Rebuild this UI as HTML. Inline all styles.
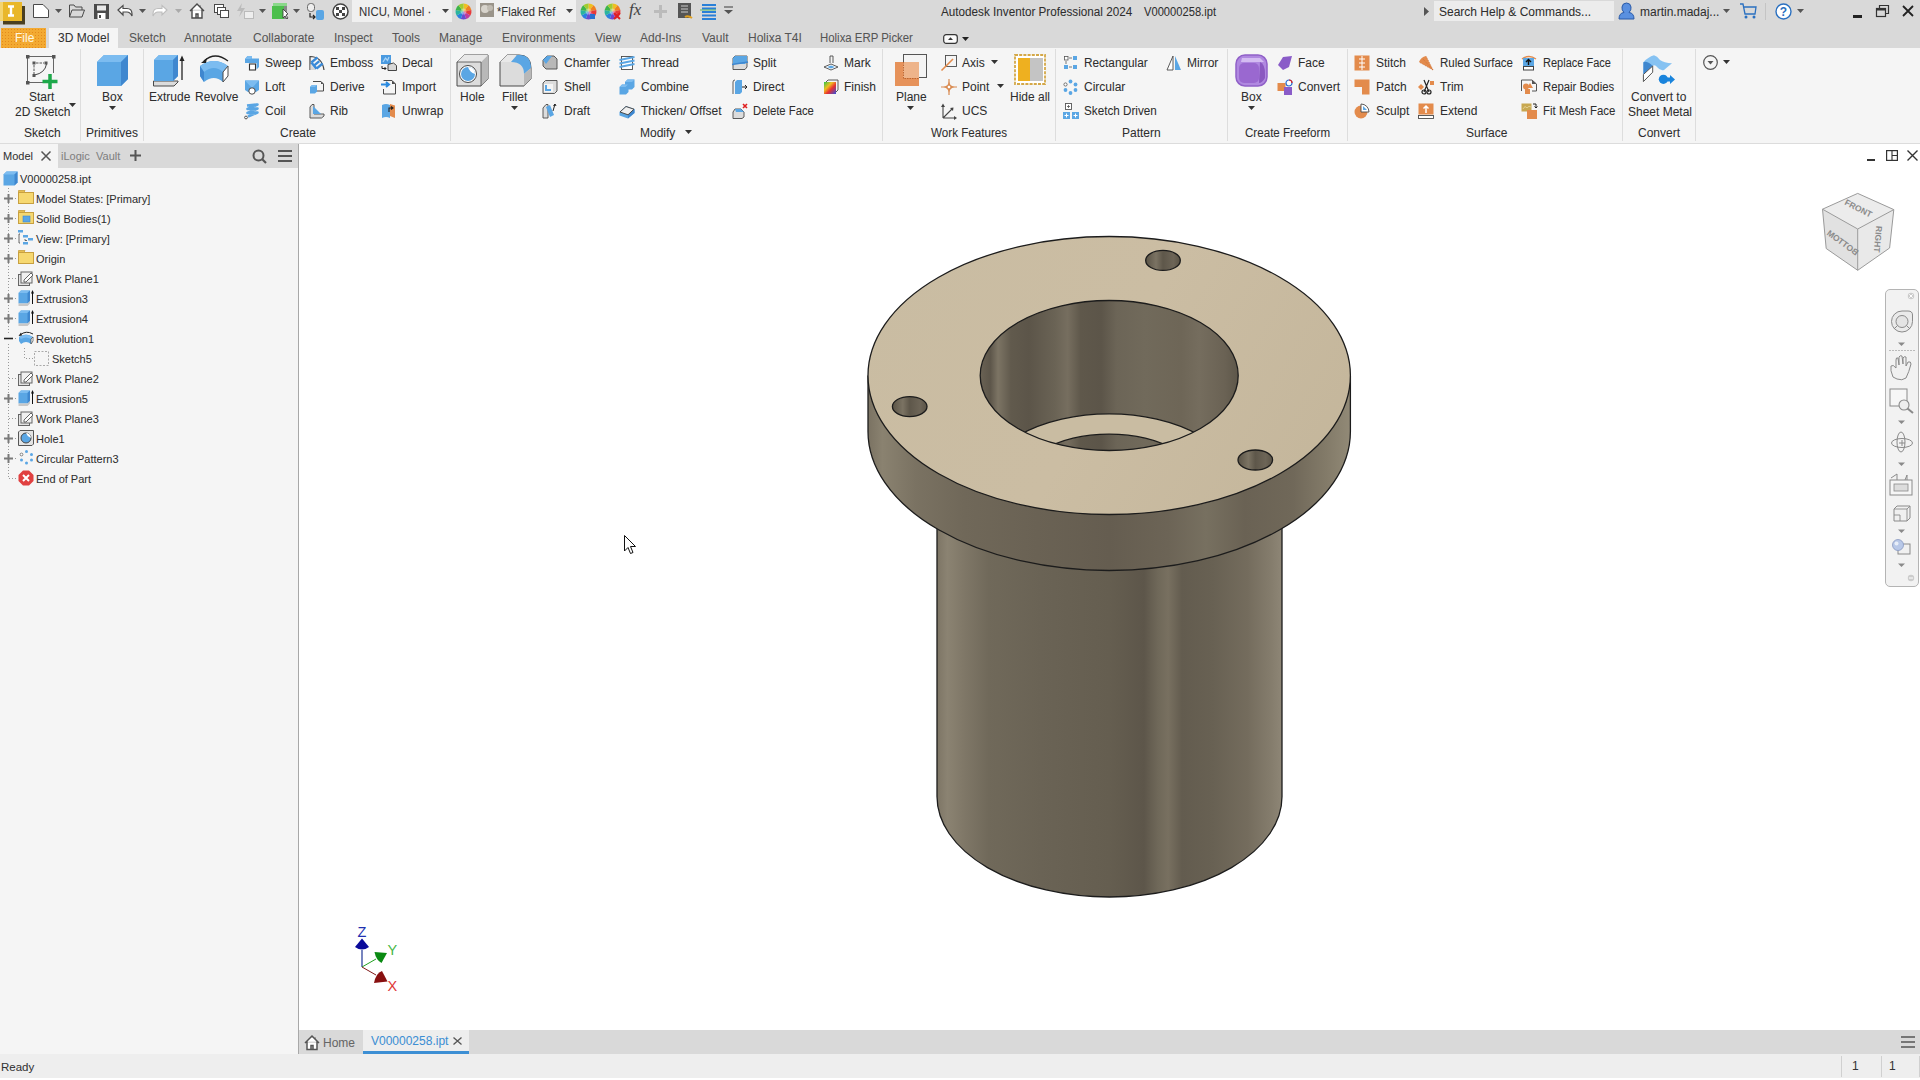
<!DOCTYPE html><html><head><meta charset='utf-8'><style>
*{margin:0;padding:0;box-sizing:border-box}
html,body{width:1920px;height:1080px;overflow:hidden;background:#fff}
body{position:relative;font-family:"Liberation Sans",sans-serif;font-size:12px;color:#3c3c3c}
.t{position:absolute;white-space:nowrap;line-height:14px;-webkit-text-stroke:0.05px currentColor}
.r{position:absolute}
.i{position:absolute;overflow:visible}
</style></head><body><div class="r" style="left:0px;top:0px;width:1920px;height:48px;background:#d9d9d9;"></div>
<div class="r" style="left:0px;top:48px;width:1920px;height:95px;background:#f5f5f5;"></div>
<div class="r" style="left:0px;top:143px;width:1920px;height:1px;background:#dcdcdc;"></div>
<div class="r" style="left:0px;top:144px;width:298px;height:910px;background:#f5f5f5;"></div>
<div class="r" style="left:298px;top:144px;width:1px;height:910px;background:#a8a8a8;"></div>
<div class="r" style="left:0px;top:144px;width:298px;height:24px;background:#d9d9d9;"></div>
<div class="r" style="left:0px;top:144px;width:58px;height:24px;background:#f5f5f5;"></div>
<div class="r" style="left:299px;top:1030px;width:1621px;height:24px;background:#d9d9d9;"></div>
<div class="r" style="left:363px;top:1030px;width:106px;height:24px;background:#eeeeee;"></div>
<div class="r" style="left:363px;top:1051px;width:106px;height:3px;background:#3d8fd4;"></div>
<div class="r" style="left:0px;top:1054px;width:1920px;height:24px;background:#eeeeee;"></div>
<div class="r" style="left:0px;top:1078px;width:1920px;height:2px;background:#ffffff;"></div>
<div class="t" style="left:941px;top:4.91px;color:#2e2e2e;transform:scaleX(0.975);transform-origin:0 0;">Autodesk Inventor Professional 2024</div>
<div class="t" style="left:1144px;top:4.91px;color:#2e2e2e;transform:scaleX(0.93);transform-origin:0 0;">V00000258.ipt</div>
<div class="r" style="left:1434px;top:1px;width:180px;height:20px;background:#ececec;"></div>
<div class="t" style="left:1439px;top:4.91px;color:#2e2e2e;">Search Help &amp; Commands...</div>
<div class="t" style="left:1640px;top:5.41px;color:#2e2e2e;">martin.madaj...</div>
<div class="r" style="left:1px;top:28px;width:45px;height:20px;background:#f3aa32;background-image:radial-gradient(circle,#e48a1c 0.7px,transparent 1px);background-size:3px 3px;"></div>
<div class="t" style="left:15px;top:31.41px;color:#fff8e0;">File</div>
<div class="r" style="left:49px;top:28px;width:69px;height:20px;background:#f5f5f5;"></div>
<div class="t" style="left:58px;top:31.41px;color:#333333;">3D Model</div>
<div class="t" style="left:129px;top:31.41px;color:#555555;">Sketch</div>
<div class="t" style="left:184px;top:31.41px;color:#555555;">Annotate</div>
<div class="t" style="left:253px;top:31.41px;color:#555555;">Collaborate</div>
<div class="t" style="left:334px;top:31.41px;color:#555555;">Inspect</div>
<div class="t" style="left:392px;top:31.41px;color:#555555;">Tools</div>
<div class="t" style="left:439px;top:31.41px;color:#555555;">Manage</div>
<div class="t" style="left:502px;top:31.41px;color:#555555;">Environments</div>
<div class="t" style="left:595px;top:31.41px;color:#555555;">View</div>
<div class="t" style="left:640px;top:31.41px;color:#555555;">Add-Ins</div>
<div class="t" style="left:702px;top:31.41px;color:#555555;">Vault</div>
<div class="t" style="left:748px;top:31.41px;color:#555555;">Holixa T4I</div>
<div class="t" style="left:820px;top:31.41px;color:#555555;transform:scaleX(0.95);transform-origin:0 0;">Holixa ERP Picker</div>
<div class="r" style="left:80px;top:49px;width:1px;height:92px;background:#dddddd;"></div>
<div class="r" style="left:143px;top:49px;width:1px;height:92px;background:#dddddd;"></div>
<div class="r" style="left:450px;top:49px;width:1px;height:92px;background:#dddddd;"></div>
<div class="r" style="left:882px;top:49px;width:1px;height:92px;background:#dddddd;"></div>
<div class="r" style="left:1055px;top:49px;width:1px;height:92px;background:#dddddd;"></div>
<div class="r" style="left:1227px;top:49px;width:1px;height:92px;background:#dddddd;"></div>
<div class="r" style="left:1347px;top:49px;width:1px;height:92px;background:#dddddd;"></div>
<div class="r" style="left:1622px;top:49px;width:1px;height:92px;background:#dddddd;"></div>
<div class="r" style="left:1695px;top:49px;width:1px;height:92px;background:#dddddd;"></div>
<div class="t" style="left:29px;top:90.41px;color:#2e2e2e;">Start</div>
<div class="t" style="left:15px;top:105.41px;color:#2e2e2e;">2D Sketch</div>
<div class="t" style="left:102px;top:90.41px;color:#2e2e2e;">Box</div>
<div class="t" style="left:149px;top:90.41px;color:#2e2e2e;">Extrude</div>
<div class="t" style="left:195px;top:90.41px;color:#2e2e2e;">Revolve</div>
<div class="t" style="left:460px;top:90.41px;color:#2e2e2e;">Hole</div>
<div class="t" style="left:502px;top:90.41px;color:#2e2e2e;">Fillet</div>
<div class="t" style="left:896px;top:90.41px;color:#2e2e2e;">Plane</div>
<div class="t" style="left:1010px;top:90.41px;color:#2e2e2e;">Hide all</div>
<div class="t" style="left:1241px;top:90.41px;color:#2e2e2e;">Box</div>
<div class="t" style="left:1631px;top:90.41px;color:#2e2e2e;">Convert to</div>
<div class="t" style="left:1628px;top:105.41px;color:#2e2e2e;">Sheet Metal</div>
<div class="t" style="left:265px;top:56.41px;color:#2e2e2e;">Sweep</div>
<div class="t" style="left:265px;top:80.41px;color:#2e2e2e;">Loft</div>
<div class="t" style="left:265px;top:104.41px;color:#2e2e2e;">Coil</div>
<div class="t" style="left:330px;top:56.41px;color:#2e2e2e;">Emboss</div>
<div class="t" style="left:330px;top:80.41px;color:#2e2e2e;">Derive</div>
<div class="t" style="left:330px;top:104.41px;color:#2e2e2e;">Rib</div>
<div class="t" style="left:402px;top:56.41px;color:#2e2e2e;">Decal</div>
<div class="t" style="left:402px;top:80.41px;color:#2e2e2e;">Import</div>
<div class="t" style="left:402px;top:104.41px;color:#2e2e2e;">Unwrap</div>
<div class="t" style="left:564px;top:56.41px;color:#2e2e2e;">Chamfer</div>
<div class="t" style="left:564px;top:80.41px;color:#2e2e2e;">Shell</div>
<div class="t" style="left:564px;top:104.41px;color:#2e2e2e;">Draft</div>
<div class="t" style="left:641px;top:56.41px;color:#2e2e2e;">Thread</div>
<div class="t" style="left:641px;top:80.41px;color:#2e2e2e;">Combine</div>
<div class="t" style="left:641px;top:104.41px;color:#2e2e2e;">Thicken/ Offset</div>
<div class="t" style="left:753px;top:56.41px;color:#2e2e2e;">Split</div>
<div class="t" style="left:753px;top:80.41px;color:#2e2e2e;">Direct</div>
<div class="t" style="left:753px;top:104.41px;color:#2e2e2e;transform:scaleX(0.94);transform-origin:0 0;">Delete Face</div>
<div class="t" style="left:844px;top:56.41px;color:#2e2e2e;">Mark</div>
<div class="t" style="left:844px;top:80.41px;color:#2e2e2e;">Finish</div>
<div class="t" style="left:962px;top:56.41px;color:#2e2e2e;">Axis</div>
<div class="t" style="left:962px;top:80.41px;color:#2e2e2e;">Point</div>
<div class="t" style="left:962px;top:104.41px;color:#2e2e2e;">UCS</div>
<div class="t" style="left:1084px;top:56.41px;color:#2e2e2e;transform:scaleX(0.985);transform-origin:0 0;">Rectangular</div>
<div class="t" style="left:1084px;top:80.41px;color:#2e2e2e;">Circular</div>
<div class="t" style="left:1084px;top:104.41px;color:#2e2e2e;transform:scaleX(0.975);transform-origin:0 0;">Sketch Driven</div>
<div class="t" style="left:1187px;top:56.41px;color:#2e2e2e;">Mirror</div>
<div class="t" style="left:1298px;top:56.41px;color:#2e2e2e;">Face</div>
<div class="t" style="left:1298px;top:80.41px;color:#2e2e2e;">Convert</div>
<div class="t" style="left:1376px;top:56.41px;color:#2e2e2e;">Stitch</div>
<div class="t" style="left:1376px;top:80.41px;color:#2e2e2e;">Patch</div>
<div class="t" style="left:1376px;top:104.41px;color:#2e2e2e;">Sculpt</div>
<div class="t" style="left:1440px;top:56.41px;color:#2e2e2e;transform:scaleX(0.96);transform-origin:0 0;">Ruled Surface</div>
<div class="t" style="left:1440px;top:80.41px;color:#2e2e2e;">Trim</div>
<div class="t" style="left:1440px;top:104.41px;color:#2e2e2e;">Extend</div>
<div class="t" style="left:1543px;top:56.41px;color:#2e2e2e;transform:scaleX(0.918);transform-origin:0 0;">Replace Face</div>
<div class="t" style="left:1543px;top:80.41px;color:#2e2e2e;transform:scaleX(0.944);transform-origin:0 0;">Repair Bodies</div>
<div class="t" style="left:1543px;top:104.41px;color:#2e2e2e;transform:scaleX(0.953);transform-origin:0 0;">Fit Mesh Face</div>
<div class="t" style="left:24px;top:126.41px;color:#2e2e2e;">Sketch</div>
<div class="t" style="left:86px;top:126.41px;color:#2e2e2e;">Primitives</div>
<div class="t" style="left:280px;top:126.41px;color:#2e2e2e;">Create</div>
<div class="t" style="left:640px;top:126.41px;color:#2e2e2e;">Modify</div>
<div class="t" style="left:931px;top:126.41px;color:#2e2e2e;transform:scaleX(0.97);transform-origin:0 0;">Work Features</div>
<div class="t" style="left:1122px;top:126.41px;color:#2e2e2e;">Pattern</div>
<div class="t" style="left:1245px;top:126.41px;color:#2e2e2e;transform:scaleX(0.966);transform-origin:0 0;">Create Freeform</div>
<div class="t" style="left:1466px;top:126.41px;color:#2e2e2e;">Surface</div>
<div class="t" style="left:1638px;top:126.41px;color:#2e2e2e;">Convert</div>
<div class="t" style="left:3px;top:149.37px;font-size:11px;color:#333333;">Model</div>
<div class="t" style="left:61px;top:149.37px;font-size:11px;color:#808080;">iLogic</div>
<div class="t" style="left:96px;top:149.37px;font-size:11px;color:#808080;">Vault</div>
<div class="t" style="left:20px;top:172.37px;font-size:11px;color:#2e2e2e;">V00000258.ipt</div>
<svg class="i" style="left:41px;top:151px;" width="10" height="10" viewBox="0 0 10 10"><path d="M0.5,0.5 L9.5,9.5 M9.5,0.5 L0.5,9.5" stroke="#555" stroke-width="1.5"/></svg>
<svg class="i" style="left:130px;top:150px;" width="11" height="11" viewBox="0 0 11 11"><path d="M5.5,0 L5.5,11 M0,5.5 L11,5.5" stroke="#555" stroke-width="2"/></svg>
<svg class="i" style="left:252px;top:149px;" width="15" height="15" viewBox="0 0 15 15"><circle cx="6.5" cy="6.5" r="5" fill="none" stroke="#555" stroke-width="2"/><path d="M10,10 L14,14" stroke="#555" stroke-width="2.2"/></svg>
<svg class="i" style="left:278px;top:150px;" width="14" height="12" viewBox="0 0 14 12"><path d="M0,1 h14 M0,6 h14 M0,11 h14" stroke="#555" stroke-width="2"/></svg>
<svg class="i" style="left:3px;top:171px;" width="15" height="15" viewBox="0 0 15 15"><path d="M0.5,3.5 L3.5,0.5 L14.5,0.5 L14.5,11.5 L11.5,14.5 L0.5,14.5 Z" fill="#5aa6e4"/><path d="M0.5,3.5 L3.5,0.5 L14.5,0.5 L11.5,3.5 Z" fill="#7cbcf0"/><path d="M11.5,3.5 L14.5,0.5 L14.5,11.5 L11.5,14.5 Z" fill="#3f87cf"/></svg>
<svg class="i" style="left:8px;top:188px;" width="1" height="290" viewBox="0 0 1 290"><path d="M0.5,0 L0.5,290" stroke="#999" stroke-width="1" stroke-dasharray="1,2"/></svg>
<svg class="i" style="left:9px;top:198px;" width="9" height="1" viewBox="0 0 9 1"><path d="M0,0.5 L9,0.5" stroke="#999" stroke-width="1" stroke-dasharray="1,2"/></svg>
<svg class="i" style="left:4px;top:194px;" width="9" height="9" viewBox="0 0 9 9"><rect x="0" y="0" width="9" height="9" fill="#f5f5f5"/><path d="M4.5,0 L4.5,9 M0,4.5 L9,4.5" stroke="#7a7a7a" stroke-width="2"/></svg>
<svg class="i" style="left:18px;top:190px;" width="16" height="16" viewBox="0 0 16 16"><path d="M0.5,2.5 L6,2.5 L7,0.5 L0.5,0.5 Z" fill="#e8c050" stroke="#c8a040" stroke-width="0.8"/><rect x="0.5" y="2.5" width="15" height="11" fill="#f6d870" stroke="#c8a040" stroke-width="1"/></svg>
<div class="t" style="left:36px;top:191.87px;font-size:11px;color:#2e2e2e;">Model States: [Primary]</div>
<svg class="i" style="left:9px;top:218px;" width="9" height="1" viewBox="0 0 9 1"><path d="M0,0.5 L9,0.5" stroke="#999" stroke-width="1" stroke-dasharray="1,2"/></svg>
<svg class="i" style="left:4px;top:214px;" width="9" height="9" viewBox="0 0 9 9"><rect x="0" y="0" width="9" height="9" fill="#f5f5f5"/><path d="M4.5,0 L4.5,9 M0,4.5 L9,4.5" stroke="#7a7a7a" stroke-width="2"/></svg>
<svg class="i" style="left:18px;top:210px;" width="16" height="16" viewBox="0 0 16 16"><path d="M0.5,2.5 L6,2.5 L7,0.5 L0.5,0.5 Z" fill="#e8c050" stroke="#c8a040" stroke-width="0.8"/><rect x="0.5" y="2.5" width="15" height="11" fill="#f6d870" stroke="#c8a040" stroke-width="1"/><rect x="5" y="6" width="7" height="6" fill="#5aa6e4" stroke="#3f87cf" stroke-width="0.6"/></svg>
<div class="t" style="left:36px;top:211.87px;font-size:11px;color:#2e2e2e;">Solid Bodies(1)</div>
<svg class="i" style="left:9px;top:238px;" width="9" height="1" viewBox="0 0 9 1"><path d="M0,0.5 L9,0.5" stroke="#999" stroke-width="1" stroke-dasharray="1,2"/></svg>
<svg class="i" style="left:4px;top:234px;" width="9" height="9" viewBox="0 0 9 9"><rect x="0" y="0" width="9" height="9" fill="#f5f5f5"/><path d="M4.5,0 L4.5,9 M0,4.5 L9,4.5" stroke="#7a7a7a" stroke-width="2"/></svg>
<svg class="i" style="left:18px;top:230px;" width="16" height="16" viewBox="0 0 16 16"><rect x="0" y="0" width="5" height="2.5" fill="#5aa6e4"/><rect x="5" y="5" width="5" height="2.5" fill="#5aa6e4"/><rect x="10" y="8" width="5" height="2.5" fill="#5aa6e4"/><rect x="5" y="12" width="5" height="2.5" fill="#5aa6e4"/><path d="M2,4 L1,4 L1,13 L2,13 M7,9 L7,10.5 L9,10.5" stroke="#444" stroke-width="0.8" fill="none"/></svg>
<div class="t" style="left:36px;top:231.87px;font-size:11px;color:#2e2e2e;">View: [Primary]</div>
<svg class="i" style="left:9px;top:258px;" width="9" height="1" viewBox="0 0 9 1"><path d="M0,0.5 L9,0.5" stroke="#999" stroke-width="1" stroke-dasharray="1,2"/></svg>
<svg class="i" style="left:4px;top:254px;" width="9" height="9" viewBox="0 0 9 9"><rect x="0" y="0" width="9" height="9" fill="#f5f5f5"/><path d="M4.5,0 L4.5,9 M0,4.5 L9,4.5" stroke="#7a7a7a" stroke-width="2"/></svg>
<svg class="i" style="left:18px;top:250px;" width="16" height="16" viewBox="0 0 16 16"><path d="M0.5,2.5 L6,2.5 L7,0.5 L0.5,0.5 Z" fill="#e8c050" stroke="#c8a040" stroke-width="0.8"/><rect x="0.5" y="2.5" width="15" height="11" fill="#f6d870" stroke="#c8a040" stroke-width="1"/></svg>
<div class="t" style="left:36px;top:251.87px;font-size:11px;color:#2e2e2e;">Origin</div>
<svg class="i" style="left:9px;top:278px;" width="9" height="1" viewBox="0 0 9 1"><path d="M0,0.5 L9,0.5" stroke="#999" stroke-width="1" stroke-dasharray="1,2"/></svg>
<svg class="i" style="left:18px;top:270px;" width="16" height="16" viewBox="0 0 16 16"><rect x="0.5" y="4.5" width="11" height="11" fill="#e4e4e4" stroke="#666" stroke-width="1"/><rect x="3" y="2" width="11" height="11" fill="#f0f0f0" stroke="#666" stroke-width="1"/><path d="M6,10 L13,3 L15,5 L8,12 L6,12 Z" fill="#fff" stroke="#555" stroke-width="0.9"/></svg>
<div class="t" style="left:36px;top:271.87px;font-size:11px;color:#2e2e2e;">Work Plane1</div>
<svg class="i" style="left:9px;top:298px;" width="9" height="1" viewBox="0 0 9 1"><path d="M0,0.5 L9,0.5" stroke="#999" stroke-width="1" stroke-dasharray="1,2"/></svg>
<svg class="i" style="left:4px;top:294px;" width="9" height="9" viewBox="0 0 9 9"><rect x="0" y="0" width="9" height="9" fill="#f5f5f5"/><path d="M4.5,0 L4.5,9 M0,4.5 L9,4.5" stroke="#7a7a7a" stroke-width="2"/></svg>
<svg class="i" style="left:18px;top:290px;" width="16" height="16" viewBox="0 0 16 16"><path d="M0.5,3 L3,0.5 L12,0.5 L12,11 L9.5,13.5 L0.5,13.5 Z" fill="#5aa6e4"/><path d="M0.5,3 L3,0.5 L12,0.5 L9.5,3 Z" fill="#7cbcf0"/><path d="M9.5,3 L12,0.5 L12,11 L9.5,13.5 Z" fill="#3f87cf"/><path d="M0.5,13.5 L9.5,13.5 L12,11 L12,13.5 L9.5,16 L0.5,16 Z" fill="#c8c8c8"/><path d="M14.5,14 L14.5,2" stroke="#111" stroke-width="1"/><path d="M13,3.5 L14.5,0 L16,3.5 Z" fill="#111"/></svg>
<div class="t" style="left:36px;top:291.87px;font-size:11px;color:#2e2e2e;">Extrusion3</div>
<svg class="i" style="left:9px;top:318px;" width="9" height="1" viewBox="0 0 9 1"><path d="M0,0.5 L9,0.5" stroke="#999" stroke-width="1" stroke-dasharray="1,2"/></svg>
<svg class="i" style="left:4px;top:314px;" width="9" height="9" viewBox="0 0 9 9"><rect x="0" y="0" width="9" height="9" fill="#f5f5f5"/><path d="M4.5,0 L4.5,9 M0,4.5 L9,4.5" stroke="#7a7a7a" stroke-width="2"/></svg>
<svg class="i" style="left:18px;top:310px;" width="16" height="16" viewBox="0 0 16 16"><path d="M0.5,3 L3,0.5 L12,0.5 L12,11 L9.5,13.5 L0.5,13.5 Z" fill="#5aa6e4"/><path d="M0.5,3 L3,0.5 L12,0.5 L9.5,3 Z" fill="#7cbcf0"/><path d="M9.5,3 L12,0.5 L12,11 L9.5,13.5 Z" fill="#3f87cf"/><path d="M0.5,13.5 L9.5,13.5 L12,11 L12,13.5 L9.5,16 L0.5,16 Z" fill="#c8c8c8"/><path d="M14.5,14 L14.5,2" stroke="#111" stroke-width="1"/><path d="M13,3.5 L14.5,0 L16,3.5 Z" fill="#111"/></svg>
<div class="t" style="left:36px;top:311.87px;font-size:11px;color:#2e2e2e;">Extrusion4</div>
<svg class="i" style="left:9px;top:338px;" width="9" height="1" viewBox="0 0 9 1"><path d="M0,0.5 L9,0.5" stroke="#999" stroke-width="1" stroke-dasharray="1,2"/></svg>
<svg class="i" style="left:4px;top:334px;" width="9" height="9" viewBox="0 0 9 9"><rect x="0" y="0" width="9" height="9" fill="#f5f5f5"/><path d="M0,4.5 L9,4.5" stroke="#222" stroke-width="1.6"/></svg>
<svg class="i" style="left:18px;top:330px;" width="16" height="16" viewBox="0 0 16 16"><path d="M1,7 Q8,2 15,7 L15,11 L13,14 Q8,10 3,14 L1,11 Z" fill="#5aa6e4"/><path d="M1,7 Q8,3 15,7 L13,9 Q8,6 3,9 Z" fill="#7cbcf0"/><path d="M13,9 L15,7 L15,11 L13,14 Z" fill="#fff" stroke="#444" stroke-width="0.7"/><path d="M2,5 Q8,0 15,4" stroke="#222" stroke-width="1" fill="none"/><path d="M0.5,6 L3,2.5 L4,5.5 Z" fill="#222"/></svg>
<div class="t" style="left:36px;top:331.87px;font-size:11px;color:#2e2e2e;">Revolution1</div>
<svg class="i" style="left:24px;top:348px;" width="10" height="11" viewBox="0 0 10 11"><path d="M0.5,0 L0.5,10.5 L10,10.5" stroke="#999" stroke-width="1" stroke-dasharray="1,2" fill="none"/></svg>
<svg class="i" style="left:34px;top:351px;" width="15" height="15" viewBox="0 0 15 15"><rect x="0.5" y="0.5" width="14" height="14" fill="none" stroke="#aaa" stroke-width="1" stroke-dasharray="2,1.5"/></svg>
<div class="t" style="left:52px;top:351.87px;font-size:11px;color:#2e2e2e;">Sketch5</div>
<svg class="i" style="left:9px;top:378px;" width="9" height="1" viewBox="0 0 9 1"><path d="M0,0.5 L9,0.5" stroke="#999" stroke-width="1" stroke-dasharray="1,2"/></svg>
<svg class="i" style="left:18px;top:370px;" width="16" height="16" viewBox="0 0 16 16"><rect x="0.5" y="4.5" width="11" height="11" fill="#e4e4e4" stroke="#666" stroke-width="1"/><rect x="3" y="2" width="11" height="11" fill="#f0f0f0" stroke="#666" stroke-width="1"/><path d="M6,10 L13,3 L15,5 L8,12 L6,12 Z" fill="#fff" stroke="#555" stroke-width="0.9"/></svg>
<div class="t" style="left:36px;top:371.87px;font-size:11px;color:#2e2e2e;">Work Plane2</div>
<svg class="i" style="left:9px;top:398px;" width="9" height="1" viewBox="0 0 9 1"><path d="M0,0.5 L9,0.5" stroke="#999" stroke-width="1" stroke-dasharray="1,2"/></svg>
<svg class="i" style="left:4px;top:394px;" width="9" height="9" viewBox="0 0 9 9"><rect x="0" y="0" width="9" height="9" fill="#f5f5f5"/><path d="M4.5,0 L4.5,9 M0,4.5 L9,4.5" stroke="#7a7a7a" stroke-width="2"/></svg>
<svg class="i" style="left:18px;top:390px;" width="16" height="16" viewBox="0 0 16 16"><path d="M0.5,3 L3,0.5 L12,0.5 L12,11 L9.5,13.5 L0.5,13.5 Z" fill="#5aa6e4"/><path d="M0.5,3 L3,0.5 L12,0.5 L9.5,3 Z" fill="#7cbcf0"/><path d="M9.5,3 L12,0.5 L12,11 L9.5,13.5 Z" fill="#3f87cf"/><path d="M0.5,13.5 L9.5,13.5 L12,11 L12,13.5 L9.5,16 L0.5,16 Z" fill="#c8c8c8"/><path d="M14.5,14 L14.5,2" stroke="#111" stroke-width="1"/><path d="M13,3.5 L14.5,0 L16,3.5 Z" fill="#111"/></svg>
<div class="t" style="left:36px;top:391.87px;font-size:11px;color:#2e2e2e;">Extrusion5</div>
<svg class="i" style="left:9px;top:418px;" width="9" height="1" viewBox="0 0 9 1"><path d="M0,0.5 L9,0.5" stroke="#999" stroke-width="1" stroke-dasharray="1,2"/></svg>
<svg class="i" style="left:18px;top:410px;" width="16" height="16" viewBox="0 0 16 16"><rect x="0.5" y="4.5" width="11" height="11" fill="#e4e4e4" stroke="#666" stroke-width="1"/><rect x="3" y="2" width="11" height="11" fill="#f0f0f0" stroke="#666" stroke-width="1"/><path d="M6,10 L13,3 L15,5 L8,12 L6,12 Z" fill="#fff" stroke="#555" stroke-width="0.9"/></svg>
<div class="t" style="left:36px;top:411.87px;font-size:11px;color:#2e2e2e;">Work Plane3</div>
<svg class="i" style="left:9px;top:438px;" width="9" height="1" viewBox="0 0 9 1"><path d="M0,0.5 L9,0.5" stroke="#999" stroke-width="1" stroke-dasharray="1,2"/></svg>
<svg class="i" style="left:4px;top:434px;" width="9" height="9" viewBox="0 0 9 9"><rect x="0" y="0" width="9" height="9" fill="#f5f5f5"/><path d="M4.5,0 L4.5,9 M0,4.5 L9,4.5" stroke="#7a7a7a" stroke-width="2"/></svg>
<svg class="i" style="left:18px;top:430px;" width="16" height="16" viewBox="0 0 16 16"><path d="M0.5,2 L2,0.5 L15.5,0.5 L15.5,14 L14,15.5 L0.5,15.5 Z" fill="#e4e4e4" stroke="#555" stroke-width="1"/><circle cx="8" cy="8" r="5" fill="#5aa6e4" stroke="#444" stroke-width="1"/><path d="M8,3 A5,5 0 0 1 13,8 A8,8 0 0 1 8,3 Z" fill="#fff"/></svg>
<div class="t" style="left:36px;top:431.87px;font-size:11px;color:#2e2e2e;">Hole1</div>
<svg class="i" style="left:9px;top:458px;" width="9" height="1" viewBox="0 0 9 1"><path d="M0,0.5 L9,0.5" stroke="#999" stroke-width="1" stroke-dasharray="1,2"/></svg>
<svg class="i" style="left:4px;top:454px;" width="9" height="9" viewBox="0 0 9 9"><rect x="0" y="0" width="9" height="9" fill="#f5f5f5"/><path d="M4.5,0 L4.5,9 M0,4.5 L9,4.5" stroke="#7a7a7a" stroke-width="2"/></svg>
<svg class="i" style="left:18px;top:450px;" width="16" height="16" viewBox="0 0 16 16"><circle cx="8.5" cy="1.5" r="1.5" fill="#5aa6e4"/><circle cx="13.5" cy="4.5" r="1.5" fill="#5aa6e4"/><circle cx="13.5" cy="10" r="1.5" fill="#5aa6e4"/><circle cx="8.5" cy="13" r="1.5" fill="#5aa6e4"/><circle cx="3.5" cy="10" r="1.5" fill="#5aa6e4"/><circle cx="3.5" cy="4.5" r="1.4" fill="#fff" stroke="#555" stroke-width="0.7"/></svg>
<div class="t" style="left:36px;top:451.87px;font-size:11px;color:#2e2e2e;">Circular Pattern3</div>
<svg class="i" style="left:9px;top:478px;" width="9" height="1" viewBox="0 0 9 1"><path d="M0,0.5 L9,0.5" stroke="#999" stroke-width="1" stroke-dasharray="1,2"/></svg>
<svg class="i" style="left:18px;top:470px;" width="16" height="16" viewBox="0 0 16 16"><path d="M5,0.5 L11,0.5 L15.5,5 L15.5,11 L11,15.5 L5,15.5 L0.5,11 L0.5,5 Z" fill="#e04040"/><path d="M5,5 L11,11 M11,5 L5,11" stroke="#fff" stroke-width="2"/></svg>
<div class="t" style="left:36px;top:471.87px;font-size:11px;color:#2e2e2e;">End of Part</div>
<div class="t" style="left:323px;top:1036.41px;color:#666666;">Home</div>
<div class="t" style="left:371px;top:1034.41px;color:#3d8fd4;">V00000258.ipt</div>
<div class="t" style="left:1px;top:1060.39px;font-size:11.5px;color:#333333;">Ready</div>
<div class="t" style="left:1852px;top:1059.41px;color:#333333;">1</div>
<div class="t" style="left:1889px;top:1059.41px;color:#333333;">1</div>
<svg class="i" style="left:244px;top:55px;" width="16" height="16" viewBox="0 0 16 16"><path d="M1,4 L3.5,1 L8,1 L8,3.5 L15,3.5 L15,12 L12.5,14.5 L12.5,8 L1,8 Z" fill="#5aa6e4"/><path d="M1,4 L3.5,1 L8,1 L8,3.5 L5.5,4 Z" fill="#7cbcf0"/><rect x="5.5" y="9" width="6" height="6" fill="#fff" stroke="#333" stroke-width="1.1"/></svg>
<svg class="i" style="left:244px;top:79px;" width="16" height="16" viewBox="0 0 16 16"><path d="M1,1.5 L15,1.5 L15,11 L12,13 L4,13 L1,11 Z" fill="#5aa6e4"/><path d="M1,1.5 L15,1.5 L8,9 Z" fill="#7cbcf0"/><circle cx="8" cy="12" r="3.2" fill="#fff" stroke="#4a4a4a"/></svg>
<svg class="i" style="left:244px;top:103px;" width="16" height="16" viewBox="0 0 16 16"><path d="M3,2.5 L13.5,1.5 L3.5,6 L13.5,5.5 L3.5,10 L13.5,9.5 L4,13.5" stroke="#5aa6e4" stroke-width="2.6" stroke-linejoin="round" fill="none"/><circle cx="2" cy="14.5" r="1.4" fill="#fff" stroke="#444" stroke-width="0.9"/></svg>
<svg class="i" style="left:309px;top:55px;" width="16" height="16" viewBox="0 0 16 16"><path d="M1,15 L1,1.5 Q13,1.5 15,15" stroke="#444" stroke-width="1.2" fill="none"/><path d="M1.5,9 L7,15 L1.5,15 Z" fill="#d8d8d8"/><g transform="rotate(-40 8 8)"><path d="M4,4 L12,4 M4,4 L4,12 M4,8 L11,8 M4,12 L12,12" stroke="#3a8ad8" stroke-width="2.4" fill="none"/></g></svg>
<svg class="i" style="left:309px;top:79px;" width="16" height="16" viewBox="0 0 16 16"><path d="M4,2.5 L12,2.5 L14.5,5 L14.5,12 L8,12" stroke="#4a4a4a" stroke-width="1" fill="none"/><path d="M12,2.5 L14.5,5 L12,5 Z" fill="#4a4a4a"/><path d="M1,8 L3,6 L8,6 L8,12.5 L6,14.5 L1,14.5 Z" fill="#5aa6e4"/><path d="M1,8 L3,6 L8,6 L6,8 Z" fill="#7cbcf0"/></svg>
<svg class="i" style="left:309px;top:103px;" width="16" height="16" viewBox="0 0 16 16"><path d="M1,4 L3,1.5 L5,1.5 L5,11 L15,11 L15,13 L12.5,15 L1,15 Z" fill="#dcdcdc" stroke="#4a4a4a" stroke-width="0.9"/><path d="M4,3 L12,11 L4,11 Z" fill="#5aa6e4"/></svg>
<svg class="i" style="left:381px;top:55px;" width="16" height="16" viewBox="0 0 16 16"><rect x="0" y="0" width="10" height="9" fill="#4a9ae0"/><path d="M2,7 L4.5,3 L6.5,5.5 L8,2" stroke="#a8d4f8" stroke-width="1.3" fill="none"/><path d="M7,9.5 L12.5,8 L15.5,10.5 L15.5,15.5 L7,15.5 Z" fill="#d8d8d8" stroke="#444" stroke-width="1"/><path d="M1,11 L1,13.5 L5,13.5 M3.5,12 L5,13.5 L3.5,15" stroke="#222" stroke-width="1" fill="none"/></svg>
<svg class="i" style="left:381px;top:79px;" width="16" height="16" viewBox="0 0 16 16"><path d="M2.5,1.5 L11,1.5 L14.5,5 L14.5,15 L2.5,15 L2.5,10" stroke="#4a4a4a" stroke-width="1" fill="none"/><path d="M11,1.5 L14.5,5 L11,5 Z" fill="#4a4a4a"/><path d="M0,5.5 L7,5.5 M5,3 L8,5.5 L5,8" stroke="#2a8ae0" stroke-width="2" fill="none"/></svg>
<svg class="i" style="left:381px;top:103px;" width="16" height="16" viewBox="0 0 16 16"><path d="M9,1 L14,2.5 L14,15 L9,13 Z" fill="#e38b4c"/><path d="M1,2 Q5,0 9,2 L9,15 Q5,13 1,15 Z" fill="#5aa6e4"/><path d="M8,9 L8,5 L12,5 M10,3.5 L12,5 L10,6.5" stroke="#222" stroke-width="1.1" fill="none"/></svg>
<svg class="i" style="left:542px;top:55px;" width="16" height="16" viewBox="0 0 16 16"><path d="M1,5 L5,1 L12,1 L15,4 L15,14 L4,14 L1,11 Z" fill="#b8b8b8" stroke="#4a4a4a" stroke-width="0.9"/><path d="M1,5 L5,1 L10,1 L4,9 Z" fill="#5aa6e4"/></svg>
<svg class="i" style="left:542px;top:79px;" width="16" height="16" viewBox="0 0 16 16"><path d="M1,4 L3.5,1.5 L15,1.5 L15,12 L12.5,14.5 L1,14.5 Z" fill="#dcdcdc" stroke="#4a4a4a" stroke-width="0.9"/><rect x="2" y="5" width="9" height="8" fill="#f4f4f4"/><path d="M3,6 L5,6 L5,10 L9,10 L9,12 L3,12 Z" fill="#5aa6e4"/></svg>
<svg class="i" style="left:542px;top:103px;" width="16" height="16" viewBox="0 0 16 16"><path d="M1,5 L4,1.5 L6,1.5 L6,15 L1,15 Z" fill="#dcdcdc" stroke="#4a4a4a" stroke-width="0.9"/><path d="M4,4 L8,2 L12,12 L8,14 Z" fill="#5aa6e4"/><path d="M11,8 L13,1 M11.5,3 L13,1 L14,3" stroke="#222" stroke-width="1" fill="none"/></svg>
<svg class="i" style="left:619px;top:55px;" width="16" height="16" viewBox="0 0 16 16"><rect x="2.5" y="1.5" width="11" height="13" fill="#fff" stroke="#4a4a4a" stroke-width="0.9"/><path d="M0.5,5 L15.5,2 M0.5,8.5 L15.5,5.5 M0.5,12 L15.5,9" stroke="#5aa6e4" stroke-width="1.8"/></svg>
<svg class="i" style="left:619px;top:79px;" width="16" height="16" viewBox="0 0 16 16"><path d="M0.5,8 L3,5.5 L6,5.5 L6,3 L8.5,0.5 L15.5,0.5 L15.5,8 L13,10.5 L9.5,10.5 L9.5,13 L7,15.5 L0.5,15.5 Z" fill="#5aa6e4"/><path d="M6,3 L8.5,0.5 L15.5,0.5 L13,3 Z M0.5,8 L3,5.5 L9,5.5 L6.5,8 Z" fill="#7cbcf0"/></svg>
<svg class="i" style="left:619px;top:103px;" width="16" height="16" viewBox="0 0 16 16"><path d="M0.5,9 L7,3 L15.5,6 L15.5,10 L9,15.5 L0.5,12.5 Z" fill="#5aa6e4"/><path d="M9,12 L15.5,6 L15.5,10 L9,15.5 Z" fill="#3f87cf"/><path d="M1,9 L7,3.5 L15,6.2 L9,11.8 Z" fill="#f0f0f0" stroke="#4a4a4a" stroke-width="1"/></svg>
<svg class="i" style="left:732px;top:55px;" width="16" height="16" viewBox="0 0 16 16"><path d="M1,3 L3,1 L15,1 L15,12 L13,14.5 L1,14.5 Z" fill="#dcdcdc" stroke="#4a4a4a" stroke-width="0.9"/><path d="M1,3 L3,1 L15,1 L15,7 L13,9 L1,9 Z" fill="#5aa6e4"/><path d="M0,9.5 L16,7" stroke="#3f87cf" stroke-width="1.5"/></svg>
<svg class="i" style="left:732px;top:79px;" width="16" height="16" viewBox="0 0 16 16"><path d="M1,15 L1,3 Q1,1 3,1" stroke="#4a4a4a" stroke-width="0.9" fill="none"/><path d="M3,3 L5,1 L10,1 L10,13 L8,15 L3,15 Z" fill="#5aa6e4"/><path d="M10,8 L15,8 M13,6 L15,8 L13,10" stroke="#222" stroke-width="1" fill="none"/></svg>
<svg class="i" style="left:732px;top:103px;" width="16" height="16" viewBox="0 0 16 16"><path d="M1,9 L3,6 L9,6 L12,9 L12,14 L10,15.5 L1,15.5 Z" fill="#dcdcdc" stroke="#4a4a4a" stroke-width="0.9"/><path d="M3,6 L9,6 L12,9 L4,9 Z" fill="#5aa6e4"/><path d="M11,1 L15,5 M15,1 L11,5" stroke="#e02020" stroke-width="1.6"/></svg>
<svg class="i" style="left:823px;top:55px;" width="16" height="16" viewBox="0 0 16 16"><path d="M7,1 L10,1 L10,8 M7,1 L7,8" stroke="#4a4a4a" stroke-width="0.9" fill="none"/><path d="M1,12 L8,9 L15,12 L8,15 Z" fill="#fff" stroke="#4a4a4a" stroke-width="0.9"/><path d="M4,12 L8,10.5 L12,12 L8,13.5 Z" fill="#5aa6e4"/></svg>
<svg class="i" style="left:823px;top:79px;" width="16" height="16" viewBox="0 0 16 16"><path d="M3,3 L5,1 L15,1 L15,11 L13,13" stroke="#4a4a4a" stroke-width="0.9" fill="none"/><defs><linearGradient id="rb" x1="0" y1="0" x2="1" y2="1"><stop offset="0" stop-color="#2ec44a"/><stop offset="0.35" stop-color="#f0c020"/><stop offset="0.6" stop-color="#e83030"/><stop offset="1" stop-color="#3050e0"/></linearGradient></defs><rect x="1" y="3" width="12" height="12" fill="url(#rb)"/></svg>
<svg class="i" style="left:941px;top:55px;" width="16" height="16" viewBox="0 0 16 16"><rect x="4.5" y="0.5" width="11" height="11" fill="none" stroke="#4a4a4a" stroke-width="0.9"/><path d="M0.5,15.5 L12,4" stroke="#e38b4c" stroke-width="1.6"/></svg>
<svg class="i" style="left:941px;top:79px;" width="16" height="16" viewBox="0 0 16 16"><path d="M8,0 L8,16 M0,8 L16,8" stroke="#d98a50" stroke-width="1.2"/><path d="M8,2.5 Q9,7 13.5,8 Q9,9 8,13.5 Q7,9 2.5,8 Q7,7 8,2.5 Z" fill="#d98a50"/><rect x="6.8" y="6.8" width="2.4" height="2.4" fill="#fff"/></svg>
<svg class="i" style="left:941px;top:103px;" width="16" height="16" viewBox="0 0 16 16"><path d="M2,15 L2,3 M2,15 L14,15 M2,15 L11,6" stroke="#444" stroke-width="1.1" fill="none"/><path d="M0,4 L2,0.5 L4,4 Z M13,13 L16,15 L13,17 Z M9,5 L12.5,4.5 L12,8 Z" fill="#444"/></svg>
<svg class="i" style="left:1063px;top:55px;" width="16" height="16" viewBox="0 0 16 16"><rect x="1.5" y="1.5" width="3.5" height="3.5" fill="#fff" stroke="#555" stroke-width="0.8"/><rect x="10" y="1" width="4" height="4" fill="#5aa6e4"/><rect x="1" y="10" width="4" height="4" fill="#5aa6e4"/><rect x="10" y="10" width="4" height="4" fill="#5aa6e4"/><path d="M6,3 L9,3 M3,6 L3,9 M6,12 L9,12" stroke="#555" stroke-width="0.8"/></svg>
<svg class="i" style="left:1063px;top:79px;" width="16" height="16" viewBox="0 0 16 16"><circle cx="7.5" cy="2.5" r="1.9" fill="#5aa6e4"/><circle cx="12.5" cy="5.5" r="1.9" fill="#5aa6e4"/><circle cx="12.5" cy="11" r="1.9" fill="#5aa6e4"/><circle cx="7.5" cy="14" r="1.9" fill="#5aa6e4"/><circle cx="2.5" cy="11" r="1.9" fill="#5aa6e4"/><circle cx="2.5" cy="5.5" r="1.6" fill="#fff" stroke="#555" stroke-width="0.8"/></svg>
<svg class="i" style="left:1063px;top:103px;" width="16" height="16" viewBox="0 0 16 16"><rect x="2.5" y="0.5" width="6" height="6" fill="#fff" stroke="#555" stroke-width="0.9"/><path d="M5.5,2 L5.5,5 M4,3.5 L7,3.5" stroke="#555" stroke-width="0.8"/><rect x="0" y="9" width="7" height="7" fill="#5aa6e4"/><rect x="9" y="9" width="7" height="7" fill="#5aa6e4"/><path d="M3.5,10.5 L3.5,14.5 M1.5,12.5 L5.5,12.5 M12.5,10.5 L12.5,14.5 M10.5,12.5 L14.5,12.5" stroke="#fff" stroke-width="1"/></svg>
<svg class="i" style="left:1166px;top:55px;" width="16" height="16" viewBox="0 0 16 16"><path d="M1,15 L7,1 L7,15 Z" fill="#fff" stroke="#4a4a4a" stroke-width="0.9"/><path d="M9,15 L9,1 L15,15 Z" fill="#5aa6e4"/></svg>
<svg class="i" style="left:1277px;top:55px;" width="16" height="16" viewBox="0 0 16 16"><path d="M1,10 L6,2 L15,1 L12,12 L6,15 Z" fill="#8a5cc8"/></svg>
<svg class="i" style="left:1277px;top:79px;" width="16" height="16" viewBox="0 0 16 16"><rect x="0.5" y="4" width="8" height="8" fill="#e38b4c"/><rect x="7" y="8" width="8" height="8" fill="#8a5cc8"/><circle cx="12" cy="4" r="3" fill="#fff" stroke="#2a70d0" stroke-width="1.2"/><path d="M12,1 A3,3 0 0 1 15,4" stroke="#e02020" stroke-width="1.2" fill="none"/></svg>
<svg class="i" style="left:1354px;top:55px;" width="16" height="16" viewBox="0 0 16 16"><rect x="0.5" y="0.5" width="15" height="15" fill="#e38b4c"/><path d="M8,1 L8,15 M5,4 L11,4 M5,8 L11,8 M5,12 L11,12" stroke="#fff" stroke-width="1"/></svg>
<svg class="i" style="left:1354px;top:79px;" width="16" height="16" viewBox="0 0 16 16"><path d="M0.5,0.5 L15.5,0.5 L15.5,15.5 L8,15.5 L8,8 L0.5,8 Z" fill="#e38b4c"/></svg>
<svg class="i" style="left:1354px;top:103px;" width="16" height="16" viewBox="0 0 16 16"><circle cx="7" cy="9" r="6.5" fill="#e38b4c"/><path d="M7,9 L7,1 A8,8 0 0 1 15,9 Z" fill="#fff" stroke="#4a4a4a" stroke-width="0.9"/><path d="M9,7 L9,3 L13,7 Z" fill="#5aa6e4"/></svg>
<svg class="i" style="left:1418px;top:55px;" width="16" height="16" viewBox="0 0 16 16"><path d="M15,15 L1,7 Q3,2 8,1 Z" fill="#e38b4c"/><path d="M15,15 L4.5,3.5 M15,15 L1,7 M15,15 L8,1" stroke="#c86a30" stroke-width="0.7" stroke-dasharray="1,1"/></svg>
<svg class="i" style="left:1418px;top:79px;" width="16" height="16" viewBox="0 0 16 16"><path d="M0,8 L3,5 L6,8 L3,11 Z" fill="#e38b4c"/><rect x="12" y="2" width="4" height="4" fill="#e38b4c"/><path d="M6,1 L11,13 M11,1 L6,13" stroke="#222" stroke-width="1.2"/><circle cx="6" cy="13" r="2" fill="none" stroke="#222" stroke-width="1.2"/><circle cx="11" cy="13" r="2" fill="none" stroke="#222" stroke-width="1.2"/></svg>
<svg class="i" style="left:1418px;top:103px;" width="16" height="16" viewBox="0 0 16 16"><rect x="0.5" y="0.5" width="15" height="11" fill="#e38b4c"/><path d="M8,10 L8,3 M5.5,5.5 L8,3 L10.5,5.5" stroke="#fff" stroke-width="1.5" fill="none"/><rect x="0.5" y="12.5" width="15" height="3" fill="#fff" stroke="#4a4a4a" stroke-width="0.9"/></svg>
<svg class="i" style="left:1521px;top:55px;" width="16" height="16" viewBox="0 0 16 16"><path d="M1,4 Q8,-1 15,4" stroke="#e38b4c" stroke-width="1.3" fill="none"/><rect x="2" y="3" width="11" height="8" fill="#5aa6e4"/><path d="M7.5,10 L7.5,5 M5,7 L7.5,4.5 L10,7" stroke="#111" stroke-width="1.4" fill="none"/><rect x="2.5" y="11.5" width="10" height="3.5" fill="#fff" stroke="#444" stroke-width="1"/></svg>
<svg class="i" style="left:1521px;top:79px;" width="16" height="16" viewBox="0 0 16 16"><path d="M0.5,12 L0.5,1 L11,1 L15.5,5 L15.5,12 L11,12" stroke="#555" stroke-width="1" fill="none"/><path d="M11,1 L15.5,5 L11,5 Z" fill="#555"/><circle cx="5" cy="7.5" r="3" fill="#e38b4c"/><path d="M6,9 L9,4 L12,9 Z" fill="#e38b4c"/><rect x="4" y="10" width="5" height="5" fill="#e38b4c"/></svg>
<svg class="i" style="left:1521px;top:103px;" width="16" height="16" viewBox="0 0 16 16"><rect x="0.5" y="0.5" width="10" height="8" fill="#c8a850"/><path d="M2,6 Q4,2 6,5 Q8,2 10,4" stroke="#e8d8a0" stroke-width="0.8" fill="none"/><rect x="6" y="7" width="10" height="9" fill="#e38b4c"/><path d="M12,1 L15,1 L15,5 M13.5,3.5 L15,5 L16.5,3.5" stroke="#222" stroke-width="1" fill="none"/></svg>
<svg class="i" style="left:25px;top:54px;" width="32" height="32" viewBox="0 0 32 32"><path d="M2.5,2.5 L28.5,2.5 L28.5,19 M2.5,2.5 L2.5,28.5 L19,28.5" stroke="#666" stroke-width="1" fill="none"/><rect x="1" y="1" width="3.5" height="3.5" fill="#555"/><rect x="27" y="1" width="3.5" height="3.5" fill="#555"/><rect x="1" y="27" width="3.5" height="3.5" fill="#555"/><path d="M9,11 L9,20 M11,9 L19,9" stroke="#555" stroke-width="1" stroke-dasharray="2.5,1" fill="none"/><path d="M9.5,21 Q20,19 21.5,10" stroke="#444" stroke-width="1" fill="none"/><rect x="7.5" y="7.5" width="3" height="3" fill="#555"/><rect x="19.5" y="7.5" width="3" height="3" fill="#555"/><rect x="7.5" y="20" width="3" height="3" fill="#555"/><path d="M25,20 L25,35 M17.5,27.5 L32.5,27.5" stroke="#1da84a" stroke-width="3.5"/></svg>
<svg class="i" style="left:96px;top:54px;" width="32" height="32" viewBox="0 0 32 32"><path d="M1,8 L8,1 L32,1 L32,25 L25,32 L1,32 Z" fill="#5aa6e4"/><path d="M1,8 L8,1 L32,1 L25,8 Z" fill="#7cbcf0"/><path d="M25,8 L32,1 L32,25 L25,32 Z" fill="#3f87cf"/></svg>
<svg class="i" style="left:153px;top:54px;" width="32" height="32" viewBox="0 0 32 32"><path d="M0.5,27 L25,27 L25,28 L21,32 L0.5,32 Z" fill="#dcdcdc" stroke="#4a4a4a" stroke-width="1"/><path d="M1,6 L6,1 L25,1 L25,22 L20,27 L1,27 Z" fill="#5aa6e4"/><path d="M1,6 L6,1 L25,1 L20,6 Z" fill="#7cbcf0"/><path d="M20,6 L25,1 L25,22 L20,27 Z" fill="#3f87cf"/><path d="M29,26 L29,4" stroke="#222" stroke-width="1.3"/><path d="M26.5,7 L29,1.5 L31.5,7 Z" fill="#222"/></svg>
<svg class="i" style="left:198px;top:54px;" width="32" height="32" viewBox="0 0 32 32"><path d="M2,12 Q16,2 30,12 L30,22 L25,28 Q16,20 6,28 L2,22 Z" fill="#5aa6e4"/><path d="M2,12 Q16,2 30,12 L25,18 Q16,10 6,18 Z" fill="#7cbcf0"/><path d="M2,12 L6,18 L6,28 L2,22 Z" fill="#3f87cf"/><path d="M25,18 L30,12 L30,22 L25,28 Z" fill="#fff" stroke="#4a4a4a" stroke-width="1"/><path d="M6,7 Q17,-3 30,7" stroke="#222" stroke-width="1.3" fill="none"/><path d="M3,9 L9,4 L8,9 Z" fill="#222"/></svg>
<svg class="i" style="left:456px;top:54px;" width="32" height="32" viewBox="0 0 32 32"><path d="M1,8 L8,1 L32,1 L32,25 L25,32 L1,32 Z" fill="#dcdcdc" stroke="#4a4a4a" stroke-width="1"/><path d="M25,8 L32,1 L32,25 L25,32 Z" fill="#b8b8b8"/><path d="M1,8 L8,1 L32,1 L25,8 Z" fill="#e8e8e8"/><path d="M1,8 L25,8 L25,32" stroke="#4a4a4a" stroke-width="0.8" fill="none"/><circle cx="12" cy="20" r="8.5" fill="#fff" stroke="#4a4a4a" stroke-width="1"/><circle cx="12" cy="20" r="7" fill="#5aa6e4"/><path d="M12,13 A7,7 0 0 1 19,20 A11,11 0 0 1 12,13 Z" fill="#fff"/></svg>
<svg class="i" style="left:499px;top:54px;" width="32" height="32" viewBox="0 0 32 32"><path d="M1,8 L8,1 L20,1 Q32,1 32,14 L32,25 L25,32 L1,32 Z" fill="#dcdcdc" stroke="#4a4a4a" stroke-width="1"/><path d="M1,8 L8,1 L18,1 L12,8 Z" fill="#e8e8e8"/><path d="M12,8 Q25,8 25,20 L32,14 Q32,1 20,1 L18,1 Z" fill="#5aa6e4"/><path d="M25,20 L32,14 L32,25 L25,32 Z" fill="#b8b8b8"/></svg>
<svg class="i" style="left:895px;top:54px;" width="32" height="32" viewBox="0 0 32 32"><rect x="8.5" y="0.5" width="23" height="23" fill="#f4f4f4" stroke="#555" stroke-width="1"/><rect x="0" y="8" width="24" height="24" fill="#e6925a"/><rect x="8" y="8" width="16" height="16" fill="#eeb48a"/><path d="M8.5,8 L8.5,24.5 L24,24.5" stroke="#b8602a" stroke-width="0.9" stroke-dasharray="1.5,1" fill="none"/></svg>
<svg class="i" style="left:1014px;top:54px;" width="32" height="32" viewBox="0 0 32 32"><rect x="1" y="1" width="30" height="29" fill="#fff" stroke="#d4a848" stroke-width="1.8" stroke-dasharray="3,1.2"/><rect x="4" y="4" width="12" height="23" fill="#eeb020"/><rect x="16" y="4" width="13" height="23" fill="#c4c4c4"/></svg>
<svg class="i" style="left:1235px;top:54px;" width="32" height="32" viewBox="0 0 32 32"><rect x="1" y="1" width="31" height="31" rx="9" fill="#b088e0" stroke="#9060c8" stroke-width="1.5"/><rect x="4" y="9" width="20" height="20" rx="5" fill="#9a68d0"/><path d="M25,8 Q30,10 30,20 L30,24 Q27,29 24,29 Z" fill="#8a58c0"/><path d="M7,4 L25,4 L29,8 L6,8 Z" fill="#d4bcf2"/></svg>
<svg class="i" style="left:1642px;top:54px;" width="32" height="32" viewBox="0 0 32 32"><path d="M1.4,8.2 Q6,3 12,1.2 Q15,2 18,6 Q22,9 30,9.3 L22,16 Q18,17 15,13 Q13,10 10.7,12 L1.4,20 Z" fill="#86c2f2"/><path d="M1.4,8.2 Q5,6.5 10.7,12 L1.4,20.5 Z" fill="#3f87cf"/><path d="M1.4,20.5 L1.4,27.6 L10.7,18.2 L10.7,12 Z" fill="#fff" stroke="#555" stroke-width="1"/><circle cx="21.4" cy="25.3" r="4.6" fill="#1a84dc"/><path d="M24,23.5 L28,23.5 L28,21 L33,25.5 L28,30 L28,27.5 L24,27.5 Z" fill="#1a84dc"/></svg>
<svg class="i" style="left:69px;top:103px;" width="7" height="4" viewBox="0 0 7 4"><path d="M0,0 L7,0 L3.5,4 Z" fill="#333"/></svg>
<svg class="i" style="left:109px;top:106px;" width="7" height="4" viewBox="0 0 7 4"><path d="M0,0 L7,0 L3.5,4 Z" fill="#333"/></svg>
<svg class="i" style="left:511px;top:106px;" width="7" height="4" viewBox="0 0 7 4"><path d="M0,0 L7,0 L3.5,4 Z" fill="#333"/></svg>
<svg class="i" style="left:907px;top:106px;" width="7" height="4" viewBox="0 0 7 4"><path d="M0,0 L7,0 L3.5,4 Z" fill="#333"/></svg>
<svg class="i" style="left:991px;top:60px;" width="7" height="4" viewBox="0 0 7 4"><path d="M0,0 L7,0 L3.5,4 Z" fill="#333"/></svg>
<svg class="i" style="left:997px;top:84px;" width="7" height="4" viewBox="0 0 7 4"><path d="M0,0 L7,0 L3.5,4 Z" fill="#333"/></svg>
<svg class="i" style="left:1248px;top:106px;" width="7" height="4" viewBox="0 0 7 4"><path d="M0,0 L7,0 L3.5,4 Z" fill="#333"/></svg>
<svg class="i" style="left:685px;top:130px;" width="7" height="4" viewBox="0 0 7 4"><path d="M0,0 L7,0 L3.5,4 Z" fill="#333"/></svg>
<svg class="i" style="left:1723px;top:60px;" width="7" height="4" viewBox="0 0 7 4"><path d="M0,0 L7,0 L3.5,4 Z" fill="#333"/></svg>
<svg class="i" style="left:0px;top:2px;" width="25" height="23" viewBox="0 0 25 23"><path d="M3,18 L3,22.5 L25,22.5 L25,4 L21,4 L21,18 Z" fill="#4a3f22"/><rect x="0" y="0" width="22" height="19" fill="#e9b72a"/><rect x="0" y="0" width="3" height="19" fill="#f4d470"/><path d="M8,4.5 L14,4.5 M11,4.5 L11,13.5 M8,13.5 L14,13.5" stroke="#fff" stroke-width="2.4"/></svg>
<svg class="i" style="left:33px;top:4px;" width="16" height="14" viewBox="0 0 16 14"><path d="M0.5,0.5 L10,0.5 L15.5,6 L15.5,13.5 L0.5,13.5 Z" fill="#fff" stroke="#4a4a4a" stroke-width="1"/></svg>
<svg class="i" style="left:55px;top:9px;" width="7" height="4" viewBox="0 0 7 4"><path d="M0,0 L7,0 L3.5,4 Z" fill="#555"/></svg>
<svg class="i" style="left:69px;top:4px;" width="16" height="14" viewBox="0 0 16 14"><path d="M0.5,1 L5,1 L6.5,3 L13,3 L13,6 M0.5,1 L0.5,13 L13,13 L15.5,6 L3,6 L0.5,13" fill="none" stroke="#4a4a4a" stroke-width="1"/></svg>
<svg class="i" style="left:94px;top:4px;" width="15" height="15" viewBox="0 0 15 15"><path d="M0,0 L15,0 L15,15 L0,15 Z" fill="#4a4a4a"/><rect x="3" y="1.5" width="9" height="5" fill="#e8e8e8"/><rect x="3.5" y="9" width="8" height="6" fill="#fff"/><rect x="5" y="11" width="2" height="3" fill="#4a4a4a"/></svg>
<svg class="i" style="left:117px;top:5px;" width="16" height="12" viewBox="0 0 16 12"><path d="M1,5 L6,0.5 L6,3.5 L10,3.5 Q15,3.5 15,9 L15,11 Q13,7 10,7 L6,7 L6,10 Z" fill="#fff" stroke="#4a4a4a" stroke-width="1.2"/></svg>
<svg class="i" style="left:139px;top:9px;" width="7" height="4" viewBox="0 0 7 4"><path d="M0,0 L7,0 L3.5,4 Z" fill="#555"/></svg>
<svg class="i" style="left:152px;top:5px;" width="16" height="12" viewBox="0 0 16 12"><path d="M15,5 L10,0.5 L10,3.5 L6,3.5 Q1,3.5 1,9 L1,11 Q3,7 6,7 L10,7 L10,10 Z" fill="#fff" stroke="#bdbdbd" stroke-width="1.1"/></svg>
<svg class="i" style="left:175px;top:9px;" width="7" height="4" viewBox="0 0 7 4"><path d="M0,0 L7,0 L3.5,4 Z" fill="#aaa"/></svg>
<svg class="i" style="left:189px;top:3px;" width="16" height="16" viewBox="0 0 16 16"><path d="M1,8 L8,1 L15,8 M3,6.5 L3,15 L13,15 L13,6.5 M11,2.5 L11,5 M7,15 L7,11 L9,11 L9,15" fill="#fff" stroke="#4a4a4a" stroke-width="1.4"/></svg>
<svg class="i" style="left:214px;top:4px;" width="15" height="14" viewBox="0 0 15 14"><rect x="0.5" y="0.5" width="9" height="8" fill="#fff" stroke="#4a4a4a"/><rect x="3.5" y="3.5" width="8" height="7" fill="#fff" stroke="#4a4a4a"/><rect x="6.5" y="6.5" width="8" height="7" fill="#fff" stroke="#4a4a4a"/></svg>
<svg class="i" style="left:236px;top:3px;" width="18" height="16" viewBox="0 0 18 16"><path d="M6,0 L1,8 L5,8 L3,14 L9,5 L5,5 Z" fill="#bbb"/><rect x="8.5" y="8.5" width="9" height="7" fill="#eee" stroke="#bbb"/></svg>
<svg class="i" style="left:259px;top:9px;" width="7" height="4" viewBox="0 0 7 4"><path d="M0,0 L7,0 L3.5,4 Z" fill="#555"/></svg>
<svg class="i" style="left:272px;top:3px;" width="17" height="16" viewBox="0 0 17 16"><rect x="0" y="3" width="14" height="13" fill="#4cbf4c"/><rect x="1" y="0" width="14" height="3" fill="#8ad88a"/><rect x="12" y="3" width="3" height="13" fill="#888"/><path d="M11,6 L11,15 L13,13 L15,16 L16,15 L14,12 L16,11 Z" fill="#fff" stroke="#333" stroke-width="0.8"/></svg>
<svg class="i" style="left:293px;top:9px;" width="7" height="4" viewBox="0 0 7 4"><path d="M0,0 L7,0 L3.5,4 Z" fill="#555"/></svg>
<svg class="i" style="left:307px;top:3px;" width="18" height="17" viewBox="0 0 18 17"><rect x="0.5" y="0.5" width="7" height="8" rx="3" fill="#eee" stroke="#666"/><rect x="9" y="7" width="8" height="10" rx="2" fill="#5aa6e4"/><path d="M3,10 L3,14 L8,14 M6,12 L8,14 L6,16" stroke="#222" stroke-width="1.2" fill="none"/></svg>
<svg class="i" style="left:332px;top:3px;" width="17" height="17" viewBox="0 0 17 17"><circle cx="8.5" cy="8.5" r="7.5" fill="#fff" stroke="#444" stroke-width="1.5"/><path d="M4,4 h3 v3 h-3z M10,4 h3 v3 h-3z M7,7 h3 v3 h-3z M4,10 h3 v3 h-3z M10,10 h3 v3 h-3z" fill="#444"/></svg>
<div class="r" style="left:352px;top:0px;width:100px;height:22px;background:#f0f0f0;"></div>
<div class="t" style="left:359px;top:4.91px;color:#333;transform:scaleX(0.95);transform-origin:0 0;">NICU, Monel ·</div>
<svg class="i" style="left:442px;top:9px;" width="7" height="4" viewBox="0 0 7 4"><path d="M0,0 L7,0 L3.5,4 Z" fill="#444"/></svg>
<svg class="i" style="left:455px;top:3px;" width="17" height="17" viewBox="0 0 17 17"><path d="M8.5,8.5 L8.50,0.50 A8,8 0 0 1 13.64,2.37 Z" fill="#f0c020"/><path d="M8.5,8.5 L13.64,2.37 A8,8 0 0 1 16.38,7.11 Z" fill="#f08020"/><path d="M8.5,8.5 L16.38,7.11 A8,8 0 0 1 15.43,12.50 Z" fill="#e83a3a"/><path d="M8.5,8.5 L15.43,12.50 A8,8 0 0 1 11.24,16.02 Z" fill="#c03aa0"/><path d="M8.5,8.5 L11.24,16.02 A8,8 0 0 1 5.76,16.02 Z" fill="#6a4ad0"/><path d="M8.5,8.5 L5.76,16.02 A8,8 0 0 1 1.57,12.50 Z" fill="#2a80e0"/><path d="M8.5,8.5 L1.57,12.50 A8,8 0 0 1 0.62,7.11 Z" fill="#2ab4a0"/><path d="M8.5,8.5 L0.62,7.11 A8,8 0 0 1 3.36,2.37 Z" fill="#3cb44a"/><path d="M8.5,8.5 L3.36,2.37 A8,8 0 0 1 8.50,0.50 Z" fill="#a0cc30"/><circle cx="8.5" cy="8.5" r="3" fill="#fff" opacity="0.35"/></svg>
<div class="r" style="left:476px;top:0px;width:100px;height:22px;background:#f0f0f0;"></div>
<svg class="i" style="left:480px;top:3px;" width="14" height="14" viewBox="0 0 14 14"><rect width="14" height="14" fill="#9a948a"/><circle cx="5" cy="6" r="4" fill="#d8d4cc"/><circle cx="10" cy="5" r="3" fill="#c0bbb2"/></svg>
<div class="t" style="left:497px;top:4.91px;color:#333;transform:scaleX(0.93);transform-origin:0 0;">*Flaked Ref</div>
<svg class="i" style="left:566px;top:9px;" width="7" height="4" viewBox="0 0 7 4"><path d="M0,0 L7,0 L3.5,4 Z" fill="#444"/></svg>
<svg class="i" style="left:580px;top:3px;" width="17" height="17" viewBox="0 0 17 17"><path d="M8.5,8.5 L8.50,0.50 A8,8 0 0 1 13.64,2.37 Z" fill="#f0c020"/><path d="M8.5,8.5 L13.64,2.37 A8,8 0 0 1 16.38,7.11 Z" fill="#f08020"/><path d="M8.5,8.5 L16.38,7.11 A8,8 0 0 1 15.43,12.50 Z" fill="#e83a3a"/><path d="M8.5,8.5 L15.43,12.50 A8,8 0 0 1 11.24,16.02 Z" fill="#c03aa0"/><path d="M8.5,8.5 L11.24,16.02 A8,8 0 0 1 5.76,16.02 Z" fill="#6a4ad0"/><path d="M8.5,8.5 L5.76,16.02 A8,8 0 0 1 1.57,12.50 Z" fill="#2a80e0"/><path d="M8.5,8.5 L1.57,12.50 A8,8 0 0 1 0.62,7.11 Z" fill="#2ab4a0"/><path d="M8.5,8.5 L0.62,7.11 A8,8 0 0 1 3.36,2.37 Z" fill="#3cb44a"/><path d="M8.5,8.5 L3.36,2.37 A8,8 0 0 1 8.50,0.50 Z" fill="#a0cc30"/><circle cx="8.5" cy="8.5" r="3" fill="#fff" opacity="0.35"/><rect x="10" y="11" width="5" height="5" fill="#2a70d0"/></svg>
<svg class="i" style="left:604px;top:3px;" width="17" height="17" viewBox="0 0 17 17"><path d="M8.5,8.5 L8.50,0.50 A8,8 0 0 1 13.64,2.37 Z" fill="#f0c020"/><path d="M8.5,8.5 L13.64,2.37 A8,8 0 0 1 16.38,7.11 Z" fill="#f08020"/><path d="M8.5,8.5 L16.38,7.11 A8,8 0 0 1 15.43,12.50 Z" fill="#e83a3a"/><path d="M8.5,8.5 L15.43,12.50 A8,8 0 0 1 11.24,16.02 Z" fill="#c03aa0"/><path d="M8.5,8.5 L11.24,16.02 A8,8 0 0 1 5.76,16.02 Z" fill="#6a4ad0"/><path d="M8.5,8.5 L5.76,16.02 A8,8 0 0 1 1.57,12.50 Z" fill="#2a80e0"/><path d="M8.5,8.5 L1.57,12.50 A8,8 0 0 1 0.62,7.11 Z" fill="#2ab4a0"/><path d="M8.5,8.5 L0.62,7.11 A8,8 0 0 1 3.36,2.37 Z" fill="#3cb44a"/><path d="M8.5,8.5 L3.36,2.37 A8,8 0 0 1 8.50,0.50 Z" fill="#a0cc30"/><circle cx="8.5" cy="8.5" r="3" fill="#fff" opacity="0.35"/><path d="M10,10 L16,16 M16,10 L10,16" stroke="#e02020" stroke-width="2"/></svg>
<div class="t" style="left:629px;top:4.41px;color:#444;top:1px;line-height:18px"><i style="font-family:'Liberation Serif';font-size:17px">fx</i></div>
<svg class="i" style="left:654px;top:5px;" width="13" height="13" viewBox="0 0 13 13"><path d="M6.5,0 L6.5,13 M0,6.5 L13,6.5" stroke="#bbb" stroke-width="3"/></svg>
<svg class="i" style="left:678px;top:3px;" width="14" height="17" viewBox="0 0 14 17"><rect x="0" y="0" width="13" height="15" fill="#555"/><path d="M3,3 h7 M3,6 h7 M3,9 h7" stroke="#ccc" stroke-width="1"/><path d="M7,14 Q10,12 14,15" stroke="#e0a020" stroke-width="2" fill="none"/></svg>
<svg class="i" style="left:700px;top:3px;" width="16" height="16" viewBox="0 0 16 16"><path d="M2,2 h14 M2,5.5 h14 M2,9 h14 M2,12.5 h14 M2,16 h14" stroke="#2a80d8" stroke-width="1.8"/><path d="M0,7 h16" stroke="#3cb44a" stroke-width="0.8"/></svg>
<svg class="i" style="left:724px;top:6px;" width="9" height="9" viewBox="0 0 9 9"><path d="M0,1 h9" stroke="#555" stroke-width="1.2"/><path d="M0,4 L9,4 L4.5,8 Z" fill="#555"/></svg>
<svg class="i" style="left:1424px;top:7px;" width="5" height="9" viewBox="0 0 5 9"><path d="M0,0 L5,4.5 L0,9 Z" fill="#555"/></svg>
<svg class="i" style="left:1618px;top:2px;" width="17" height="18" viewBox="0 0 17 18"><path d="M1,17 Q1,11 6,10.5 Q3.5,8 4,5 Q4.5,1 8.5,1 Q12.5,1 13,5 Q13.5,8 11,10.5 Q16,11 16,17 Z" fill="#5a90e0" stroke="#2a5aa8" stroke-width="1"/></svg>
<svg class="i" style="left:1723px;top:9px;" width="7" height="4" viewBox="0 0 7 4"><path d="M0,0 L7,0 L3.5,4 Z" fill="#555"/></svg>
<svg class="i" style="left:1740px;top:3px;" width="17" height="16" viewBox="0 0 17 16"><path d="M0,1 L3,1 L5,11 L15,11 L16,4 L4,4" fill="none" stroke="#2a70c0" stroke-width="1.3"/><circle cx="6" cy="14" r="1.5" fill="#2a70c0"/><circle cx="14" cy="14" r="1.5" fill="#2a70c0"/></svg>
<div class="r" style="left:1765px;top:3px;width:1px;height:17px;background:#c4c4c4;"></div>
<svg class="i" style="left:1775px;top:3px;" width="17" height="17" viewBox="0 0 17 17"><circle cx="8.5" cy="8.5" r="7.5" fill="#fff" stroke="#2a70c0" stroke-width="1.4"/><text x="8.5" y="13" text-anchor="middle" font-family="Liberation Sans" font-weight="bold" font-size="12" fill="#2a70c0">?</text></svg>
<svg class="i" style="left:1797px;top:9px;" width="7" height="4" viewBox="0 0 7 4"><path d="M0,0 L7,0 L3.5,4 Z" fill="#555"/></svg>
<div class="r" style="left:1853px;top:15px;width:9px;height:2.5px;background:#222;"></div>
<svg class="i" style="left:1876px;top:5px;" width="13" height="12" viewBox="0 0 13 12"><path d="M3.5,3 L3.5,0.5 L12.5,0.5 L12.5,8.5 L10,8.5" fill="none" stroke="#333" stroke-width="1.2"/><rect x="0.5" y="3.5" width="9" height="8" fill="none" stroke="#333" stroke-width="1.2"/><path d="M0.5,4.5 h9" stroke="#333" stroke-width="2"/></svg>
<svg class="i" style="left:1902px;top:5px;" width="12" height="12" viewBox="0 0 12 12"><path d="M1,1 L11,11 M11,1 L1,11" stroke="#222" stroke-width="1.8"/></svg>
<svg class="i" style="left:1703px;top:55px;" width="15" height="15" viewBox="0 0 15 15"><circle cx="7.5" cy="7.5" r="6.8" fill="none" stroke="#555" stroke-width="1.2"/><path d="M4.5,6 L10.5,6 L7.5,9.5 Z" fill="#555"/></svg>
<svg class="i" style="left:943px;top:34px;" width="15" height="10" viewBox="0 0 15 10"><rect x="0.7" y="0.7" width="13.6" height="8.6" rx="2.5" fill="#fafafa" stroke="#333" stroke-width="1.2"/><path d="M5,6 L7.5,3.2 L10,6 Z" fill="#333"/></svg>
<svg class="i" style="left:961.5px;top:37px;" width="7" height="4" viewBox="0 0 7 4"><path d="M0,0 L7,0 L3.5,4 Z" fill="#222"/></svg>
<div class="r" style="left:1867px;top:159px;width:8px;height:2px;background:#333;"></div>
<svg class="i" style="left:1886px;top:150px;" width="12" height="11" viewBox="0 0 12 11"><rect x="0.6" y="0.6" width="10.8" height="9.8" fill="none" stroke="#333" stroke-width="1.2"/><path d="M6,0.6 L6,10.4 M6,5.5 L11.4,5.5" stroke="#333" stroke-width="1.1"/></svg>
<svg class="i" style="left:1907px;top:150px;" width="11" height="11" viewBox="0 0 11 11"><path d="M0.5,0.5 L10.5,10.5 M10.5,0.5 L0.5,10.5" stroke="#333" stroke-width="1.4"/></svg>
<svg class="i" style="left:0px;top:0px;" width="1920" height="1080" viewBox="0 0 1920 1080"><polygon points="1857.7,193.4 1893.8,209.6 1857.7,229 1822.5,209.2" fill="#ececec"/><polygon points="1822.5,209.2 1857.7,229 1857.7,270.3 1826.2,248.5" fill="#e1e1e1"/><polygon points="1857.7,229 1893.8,209.6 1889.6,248 1857.7,270.3" fill="#e9e9e9"/><polygon points="1857.7,193.4 1893.8,209.6 1889.6,248 1857.7,270.3 1826.2,248.5 1822.5,209.2" fill="none" stroke="#9a9a9a" stroke-width="1"/><polyline points="1822.5,209.2 1857.7,229 1893.8,209.6" fill="none" stroke="#9a9a9a" stroke-width="1"/><polyline points="1857.7,229 1857.7,270.3" fill="none" stroke="#9a9a9a" stroke-width="1"/><text transform="translate(1857,211) rotate(27)" text-anchor="middle" font-family="Liberation Sans" font-weight="bold" font-size="8.5" fill="#8a8a8a">FRONT</text><text transform="translate(1875,239) rotate(95)" text-anchor="middle" font-family="Liberation Sans" font-weight="bold" font-size="8.5" fill="#8a8a8a">RIGHT</text><text transform="translate(1841,245) rotate(36) scale(-1,1)" text-anchor="middle" font-family="Liberation Sans" font-weight="bold" font-size="8.5" fill="#8a8a8a">BOTTOM</text></svg>
<div class="r" style="left:1885px;top:289px;width:34px;height:298px;background:#f2f2f2;border:1.5px solid #b4b4b4;border-radius:5px;"></div>
<svg class="i" style="left:0px;top:0px;" width="1920" height="1080" viewBox="0 0 1920 1080"><circle cx="1911" cy="296" r="3.2" fill="#ccc"/><path d="M1909.3,294.3 L1912.7,297.7 M1912.7,294.3 L1909.3,297.7" stroke="#fff" stroke-width="1"/><path d="M1902,311 A10.5,10.5 0 1 0 1912.5,321.5 L1912.5,315 Q1912.5,311 1908,311 Z" fill="#eaeaea" stroke="#8a8a8a" stroke-width="1"/><circle cx="1902" cy="321.5" r="6" fill="#e4e4e4" stroke="#8a8a8a" stroke-width="1"/><path d="M1897.5,325.5 L1894,329 M1906.5,325.5 L1910,329" stroke="#8a8a8a" stroke-width="1"/><path d="M1898,342.5 L1905,342.5 L1901.5,346 Z" fill="#8a8a8a"/><path d="M1898,420.5 L1905,420.5 L1901.5,424 Z" fill="#8a8a8a"/><path d="M1898,462.5 L1905,462.5 L1901.5,466 Z" fill="#8a8a8a"/><path d="M1898,529.5 L1905,529.5 L1901.5,533 Z" fill="#8a8a8a"/><path d="M1898,563.5 L1905,563.5 L1901.5,567 Z" fill="#8a8a8a"/><path d="M1889,350.5 L1915,350.5" stroke="#bbb" stroke-width="1" stroke-dasharray="2,1"/><path d="M1893,377 Q1890,370 1891,366 Q1893,364 1896,368 L1896,360 Q1896,357 1898,358 L1899,365 L1899,357 Q1900,355 1902,356 L1903,364 L1903,358 Q1904,356 1906,357 L1906,366 L1908,362 Q1911,361 1911,364 Q1909,372 1906,378 Q1902,381 1897,379 Z" fill="#f0f0f0" stroke="#8a8a8a" stroke-width="1"/><rect x="1890" y="389" width="17" height="17" fill="#f6f6f6" stroke="#8a8a8a" stroke-width="1"/><circle cx="1904" cy="405" r="5" fill="#eee" stroke="#8a8a8a" stroke-width="1.1"/><path d="M1907.5,408.5 L1913,413" stroke="#8a8a8a" stroke-width="2"/><ellipse cx="1902" cy="443" rx="10.5" ry="4.5" fill="none" stroke="#8a8a8a" stroke-width="1"/><ellipse cx="1901" cy="442" rx="4" ry="10" fill="none" stroke="#8a8a8a" stroke-width="1"/><path d="M1899,443 h6 M1902,440 v6" stroke="#8a8a8a" stroke-width="1"/><path d="M1891,478 L1897,474 L1897,480 M1905,480 L1907,475 L1907,480" fill="none" stroke="#8a8a8a" stroke-width="1"/><rect x="1890" y="480" width="22" height="15" fill="#f6f6f6" stroke="#8a8a8a" stroke-width="1"/><rect x="1894" y="484" width="14" height="7" fill="#ddd" stroke="#8a8a8a" stroke-width="0.8"/><path d="M1894,509 L1897,506 L1910,506 L1910,518 L1907,521 L1894,521 Z" fill="#f0f0f0" stroke="#8a8a8a" stroke-width="1"/><path d="M1894,509 L1907,509 L1907,521 M1907,509 L1910,506 M1894,515 L1900,515 L1900,521" fill="none" stroke="#8a8a8a" stroke-width="0.9"/><rect x="1898" y="544" width="12" height="10" fill="#f0f0f0" stroke="#8a8a8a" stroke-width="1"/><circle cx="1898" cy="545" r="5.5" fill="#b8c8e8" stroke="#8898c0" stroke-width="0.8"/><circle cx="1896.5" cy="543.5" r="2" fill="#e8eef8"/><circle cx="1911" cy="578" r="3.2" fill="#ccc"/><path d="M1909,578 L1913,578" stroke="#fff" stroke-width="1"/></svg>
<svg class="i" style="left:0px;top:0px;" width="1920" height="1080" viewBox="0 0 1920 1080"><path d="M362,967 L362,950" stroke="#6a78b8" stroke-width="1.8"/><path d="M362,967 L376,959" stroke="#20a020" stroke-width="1"/><path d="M362,967 L376,975" stroke="#801818" stroke-width="1"/><path d="M362,938.5 L355,947 Q362,952 369,947 Z" fill="#0a0a9a"/><path d="M374.5,952 L387,953 L381.5,963 Q376,960 374.5,952 Z" fill="#0a8a12"/><path d="M374,983 L387.5,981.5 L382,971 Q376,973 374,983 Z" fill="#881010"/><text x="357.5" y="937" font-family="Liberation Sans" font-size="14.5" fill="#2030b0">Z</text><text x="387.5" y="954.5" font-family="Liberation Sans" font-size="14.5" fill="#48b848">Y</text><text x="387.5" y="990.5" font-family="Liberation Sans" font-size="14.5" fill="#e03838">X</text></svg>
<svg class="i" style="left:624px;top:535px;" width="13" height="20" viewBox="0 0 13 20"><path d="M0.5,0.5 L0.5,16 L4,12.5 L6.5,18.5 L9,17.5 L6.5,11.5 L11.5,11.5 Z" fill="#fff" stroke="#111" stroke-width="1"/></svg>
<svg class="i" style="left:304px;top:1035px;" width="16" height="15" viewBox="0 0 16 15"><path d="M1,8 L8,1 L15,8 M3,6.5 L3,14.5 L13,14.5 L13,6.5 M11,2.5 L11,5 M7,14.5 L7,10.5 L9,10.5 L9,14.5" fill="#fff" stroke="#555" stroke-width="1.5"/></svg>
<svg class="i" style="left:453px;top:1037px;" width="9" height="8" viewBox="0 0 9 8"><path d="M0.5,0.5 L8.5,7.5 M8.5,0.5 L0.5,7.5" stroke="#555" stroke-width="1.3"/></svg>
<svg class="i" style="left:1901px;top:1036px;" width="14" height="12" viewBox="0 0 14 12"><path d="M0,1 h14 M0,6 h14 M0,11 h14" stroke="#555" stroke-width="1.6"/></svg>
<div class="r" style="left:1841px;top:1056px;width:1px;height:21px;background:#d0d0d0;"></div>
<div class="r" style="left:1881px;top:1056px;width:1px;height:21px;background:#d0d0d0;"></div>
<div class="r" style="left:1919px;top:1056px;width:1px;height:21px;background:#d0d0d0;"></div>
<svg class="i" style="left:0;top:0" width="1920" height="1080" viewBox="0 0 1920 1080"><defs>
<linearGradient id="gShaft" x1="937" y1="0" x2="1282" y2="0" gradientUnits="userSpaceOnUse">
<stop offset="0" stop-color="#7d7565"/><stop offset="0.03" stop-color="#8b8372"/><stop offset="0.08" stop-color="#7f7767"/>
<stop offset="0.15" stop-color="#70695a"/><stop offset="0.3" stop-color="#6a6355"/><stop offset="0.5" stop-color="#655e50"/>
<stop offset="0.6" stop-color="#5d564a"/><stop offset="0.64" stop-color="#6f6859"/><stop offset="0.67" stop-color="#787060"/>
<stop offset="0.71" stop-color="#635c4f"/><stop offset="0.8" stop-color="#686153"/><stop offset="0.9" stop-color="#746c5d"/>
<stop offset="0.97" stop-color="#857d6d"/><stop offset="1" stop-color="#8e8676"/></linearGradient>
<linearGradient id="gFlange" x1="868" y1="0" x2="1351" y2="0" gradientUnits="userSpaceOnUse">
<stop offset="0" stop-color="#7a7262"/><stop offset="0.03" stop-color="#8a8270"/><stop offset="0.1" stop-color="#7a7262"/>
<stop offset="0.2" stop-color="#706859"/><stop offset="0.35" stop-color="#6a6254"/><stop offset="0.5" stop-color="#655d50"/>
<stop offset="0.62" stop-color="#6c6456"/><stop offset="0.7" stop-color="#777060"/><stop offset="0.78" stop-color="#6a6254"/>
<stop offset="0.88" stop-color="#706859"/><stop offset="0.95" stop-color="#837b69"/><stop offset="1" stop-color="#928a77"/></linearGradient>
<linearGradient id="gTop" x1="868" y1="236" x2="1350" y2="517" gradientUnits="userSpaceOnUse">
<stop offset="0" stop-color="#c9bca2"/><stop offset="0.5" stop-color="#cbbda3"/><stop offset="1" stop-color="#c3b59a"/></linearGradient>
<linearGradient id="gBore" x1="980" y1="0" x2="1238" y2="0" gradientUnits="userSpaceOnUse"><stop offset="0" stop-color="#6a6254"/><stop offset="0.04" stop-color="#5d564a"/><stop offset="0.07" stop-color="#7c7464"/><stop offset="0.12" stop-color="#615a4d"/><stop offset="0.19" stop-color="#5c5549"/><stop offset="0.29" stop-color="#6a6355"/><stop offset="0.34" stop-color="#766e5f"/><stop offset="0.39" stop-color="#5f584b"/><stop offset="0.47" stop-color="#5c5549"/><stop offset="0.53" stop-color="#6c6557"/><stop offset="0.64" stop-color="#716a5b"/><stop offset="0.78" stop-color="#6e6657"/><stop offset="0.85" stop-color="#756d5e"/><stop offset="0.95" stop-color="#6a6254"/><stop offset="1" stop-color="#5e574a"/></linearGradient>
<linearGradient id="gHole" x1="0" y1="0" x2="1" y2="0">
<stop offset="0" stop-color="#5a5346"/><stop offset="0.3" stop-color="#7b7363"/><stop offset="0.5" stop-color="#5e574a"/><stop offset="0.8" stop-color="#6d6557"/><stop offset="1" stop-color="#5a5346"/></linearGradient>
<clipPath id="cBore"><ellipse cx="1109.2" cy="375.5" rx="129" ry="75"/></clipPath>
</defs><path d="M937,500 L937,796.5 A172.5 100.5 0 0 0 1282,796.5 L1282,500 Z" fill="url(#gShaft)"/><path d="M937,529 L937,796.5 A172.5 100.5 0 0 0 1282,796.5 L1282,528" stroke="#1c1c1c" stroke-width="1.3" fill="none"/><path d="M868,375.5 L868,431.5 A241.2 139 0 0 0 1350.4,431.5 L1350.4,375.5 Z" fill="url(#gFlange)"/><path d="M868,375.5 L868,431.5 A241.2 139 0 0 0 1350.4,431.5 L1350.4,375.5" stroke="#1c1c1c" stroke-width="1.3" fill="none"/><ellipse cx="1109.2" cy="375.5" rx="241.2" ry="139" fill="url(#gTop)" stroke="#1c1c1c" stroke-width="1.3" /><ellipse cx="1109.2" cy="375.5" rx="129" ry="75" fill="url(#gBore)"/><g clip-path="url(#cBore)"><ellipse cx="1109.2" cy="488.8" rx="129" ry="75" fill="#c9bca2" stroke="#1c1c1c" stroke-width="1.2"/><ellipse cx="1109.2" cy="488.8" rx="94" ry="54.6" fill="url(#gBore)" stroke="#1c1c1c" stroke-width="1.2"/></g><ellipse cx="1109.2" cy="375.5" rx="129" ry="75" stroke="#1c1c1c" stroke-width="1.3" fill="none"/><ellipse cx="909.7" cy="406.6" rx="17.3" ry="10" fill="url(#gHole)" stroke="#1c1c1c" stroke-width="1.3" /><ellipse cx="1163" cy="260.4" rx="17.3" ry="10" fill="url(#gHole)" stroke="#1c1c1c" stroke-width="1.3" /><ellipse cx="1255.3" cy="460" rx="17.3" ry="10" fill="url(#gHole)" stroke="#1c1c1c" stroke-width="1.3" /></svg></body></html>
